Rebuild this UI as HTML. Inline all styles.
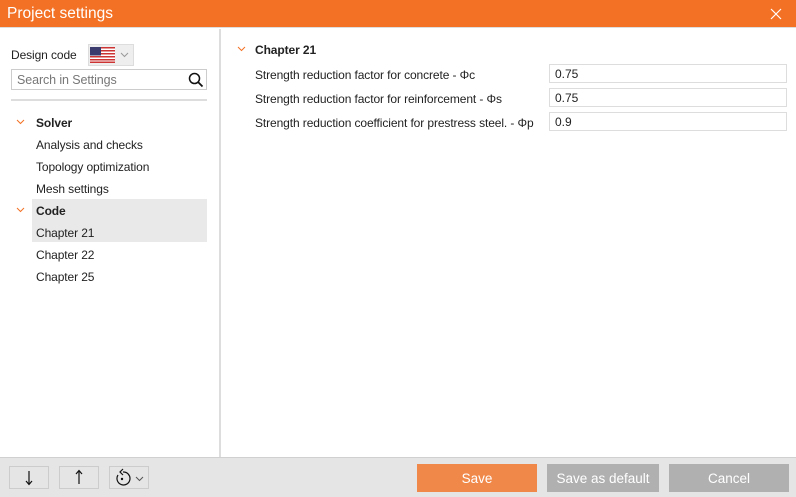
<!DOCTYPE html>
<html><head><meta charset="utf-8"><style>
*{margin:0;padding:0;box-sizing:border-box}
body{width:796px;height:497px;overflow:hidden;background:#fff;font-family:"Segoe UI","Liberation Sans",sans-serif;font-size:12px;color:#222;position:relative}
.a{position:absolute}
.title{left:0;top:0;width:796px;height:28px;background:#f37124;color:#fff;font-size:15.5px;line-height:28px;padding-left:7px;border-bottom:1px solid #ddd}
.t{white-space:nowrap;font-size:12px;letter-spacing:-0.1px}
.inp{left:549px;width:238px;height:19px;border:1px solid #ddd;padding-left:5px;line-height:18px;font-size:12px}
.btn{top:464px;height:28px;color:#fff;font-size:13.5px;line-height:29px;text-align:center}
.sb{top:466px;height:23px;border:1px solid #ccc}
</style></head><body>
<div class="a title">Project settings</div>
<svg class="a" style="left:770px;top:8px" width="12" height="12"><path d="M1 1L11 11M11 1L1 11" stroke="#fff" stroke-width="1.2"/></svg>
<div class="a" style="left:0;top:29px;width:221px;height:428px;border-right:2px solid #ddd"></div>
<div class="a t" style="left:11px;top:48px">Design code</div>
<div class="a" style="left:88px;top:44px;width:46px;height:22px;border:1px solid #ddd;background:#eee"></div>
<svg class="a" style="left:90px;top:47px" width="25" height="16"><rect width="25" height="16" fill="#fff"/><g fill="#c33"><rect y="0" width="25" height="1.5"/><rect y="3" width="25" height="1.5"/><rect y="6" width="25" height="1.5"/><rect y="9" width="25" height="1.5"/><rect y="12" width="25" height="1.5"/><rect y="14.5" width="25" height="1.5"/></g><rect width="11" height="8.5" fill="#3c3b6e"/></svg>
<svg class="a" style="left:120px;top:52px" width="9" height="6"><path d="M1 1L4.5 4.5L8 1" stroke="#999" fill="none"/></svg>
<div class="a" style="left:11px;top:69px;width:196px;height:21px;border:1px solid #ccc"></div>
<div class="a t" style="left:17px;top:73px;color:#777;font-size:12.5px">Search in Settings</div>
<svg class="a" style="left:188px;top:72px" width="16" height="16"><circle cx="6.5" cy="6.5" r="5" stroke="#111" stroke-width="1.5" fill="none"/><path d="M10 10L14.5 14.5" stroke="#111" stroke-width="1.8"/></svg>
<div class="a" style="left:11px;top:99px;width:196px;height:2px;background:#ddd"></div>
<svg class="a" style="left:16px;top:119px" width="9" height="6"><path d="M1 1L4.5 4.5L8 1" stroke="#f37124" fill="none"/></svg>
<div class="a t" style="left:36px;top:116px;font-weight:bold">Solver</div>
<div class="a t" style="left:36px;top:138px">Analysis and checks</div>
<div class="a t" style="left:36px;top:160px">Topology optimization</div>
<div class="a t" style="left:36px;top:182px">Mesh settings</div>
<div class="a" style="left:32px;top:199px;width:175px;height:43px;background:#e9e9e9"></div>
<svg class="a" style="left:16px;top:207px" width="9" height="6"><path d="M1 1L4.5 4.5L8 1" stroke="#f37124" fill="none"/></svg>
<div class="a t" style="left:36px;top:204px;font-weight:bold">Code</div>
<div class="a t" style="left:36px;top:226px">Chapter 21</div>
<div class="a t" style="left:36px;top:248px">Chapter 22</div>
<div class="a t" style="left:36px;top:270px">Chapter 25</div>
<svg class="a" style="left:237px;top:46px" width="9" height="6"><path d="M1 1L4.5 4.5L8 1" stroke="#f37124" fill="none"/></svg>
<div class="a t" style="left:255px;top:43px;font-weight:bold">Chapter 21</div>
<div class="a t" style="left:255px;top:68px">Strength reduction factor for concrete - Φc</div>
<div class="a t" style="left:255px;top:92px">Strength reduction factor for reinforcement - Φs</div>
<div class="a t" style="left:255px;top:116px">Strength reduction coefficient for prestress steel. - Φp</div>
<div class="a inp" style="top:64px">0.75</div>
<div class="a inp" style="top:88px">0.75</div>
<div class="a inp" style="top:112px">0.9</div>
<div class="a" style="left:0;top:457px;width:796px;height:40px;background:#e5e5e5;border-top:1px solid #d0d0d0"></div>
<div class="a sb" style="left:9px;width:40px"></div>
<div class="a sb" style="left:59px;width:40px"></div>
<div class="a sb" style="left:109px;width:40px"></div>
<svg class="a" style="left:9px;top:466px" width="40" height="23"><path d="M20 5V18M17 15L20 18.5L23 15" stroke="#111" fill="none" stroke-width="1.2"/></svg>
<svg class="a" style="left:59px;top:466px" width="40" height="23"><path d="M20 18V5M17 8L20 4.5L23 8" stroke="#111" fill="none" stroke-width="1.2"/></svg>
<svg class="a" style="left:111px;top:468px" width="36" height="20"><path d="M7 7A6.5 6.5 0 1 0 12 4" stroke="#111" fill="none" stroke-width="1.2"/><path d="M12 1L9 4L12 7" stroke="#111" fill="none" stroke-width="1.2"/><circle cx="11" cy="11" r="1.2" fill="#111"/><path d="M25 9L28.5 12.5L32 9" stroke="#555" fill="none"/></svg>
<div class="a btn" style="left:417px;width:120px;background:#f0884a">Save</div>
<div class="a btn" style="left:547px;width:112px;background:#b0b0b0">Save as default</div>
<div class="a btn" style="left:669px;width:120px;background:#b0b0b0">Cancel</div>
</body></html>
